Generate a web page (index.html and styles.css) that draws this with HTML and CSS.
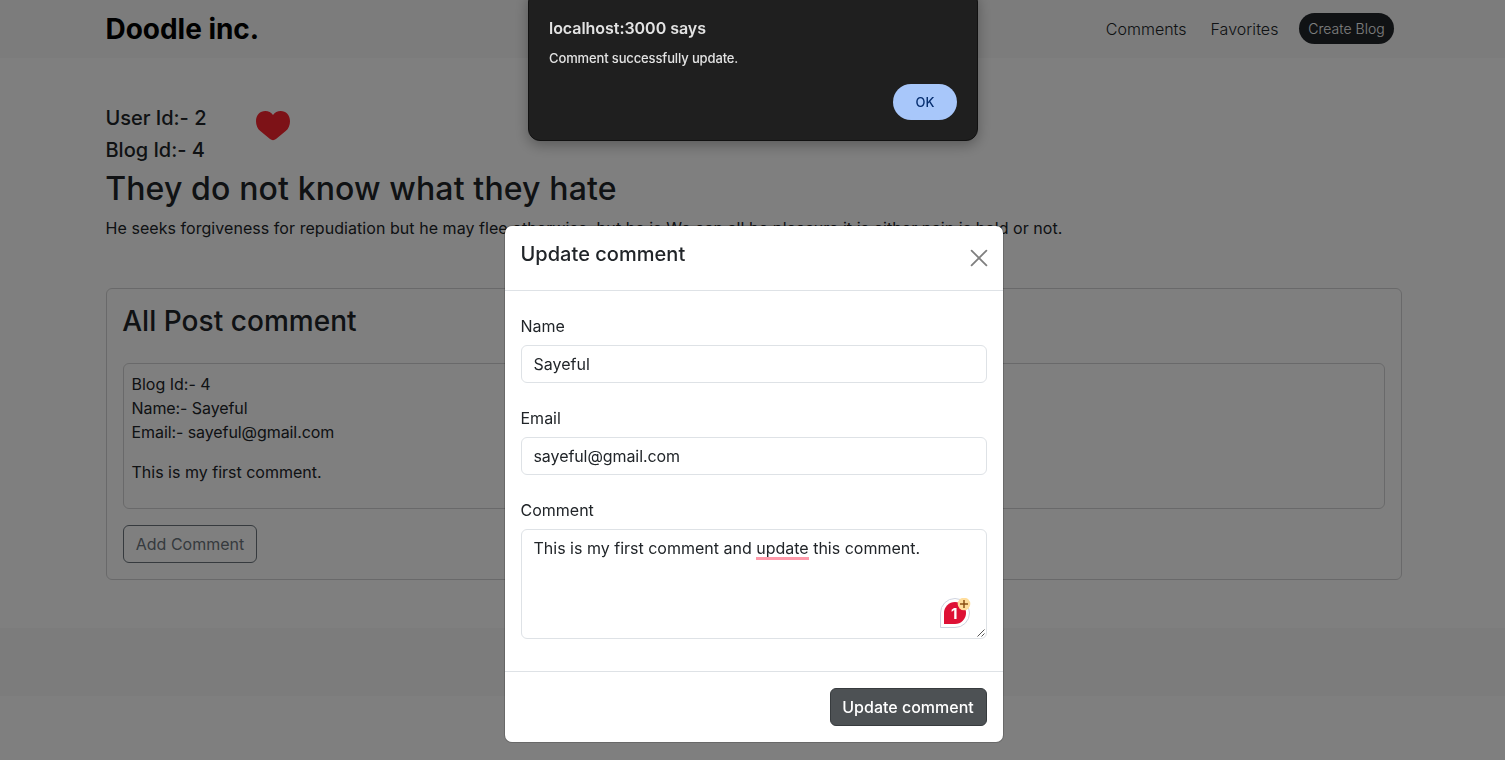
FILE: index.html
```
<!DOCTYPE html>
<html lang="en">
<head>
<meta charset="utf-8">
<title>Doodle inc.</title>
<link rel="stylesheet" href="styles.css">
</head>
<body>
<header class="navbar">
  <div class="container nav-row">
    <a class="brand">Doodle inc.</a>
    <nav class="links"><a class="link-comments">Comments</a><a class="link-favorites">Favorites</a><a class="create">Create Blog</a></nav>
  </div>
</header>
<main class="container">
  <div class="ids">
    <div><h5>User Id:- 2</h5><h5>Blog Id:- 4</h5></div>
    <svg class="heart" viewBox="0 0 34 30"><path d="M17 29.200C15.900 29.200 14.900 28.700 14 28L4.300 20.100C1.500 17.700 0 14.100 0 10.200C0 4.100 4 0 9.300 0C12.600 0 15.200 1.300 17 3.900C18.800 1.300 21.400 0 24.700 0C30 0 34 4.100 34 10.200C34 14.100 32.500 17.700 29.700 20.100L20 28C19.100 28.700 18.100 29.200 17 29.200Z"/></svg>
  </div>
  <h1>They do not know what they hate</h1>
  <p class="lead">He seeks forgiveness for repudiation but he may flee otherwise, but he is We can all be pleasure it is either pain is held or not.</p>
  <section class="card">
    <h2>All Post comment</h2>
    <div class="comment">
      <div>Blog Id:- 4</div><div class="tight">Name:- Sayeful</div><div class="tight">Email:- sayeful@gmail.com</div>
      <p>This is my first comment.</p>
    </div>
    <button class="btn add">Add Comment</button>
  </section>
</main>
<footer class="footer"></footer>

<div class="backdrop">
  <div class="modal">
    <div class="modal-header">
      <h5 class="modal-title">Update comment</h5>
      <svg class="close" viewBox="0 0 16 16"><path d="M.6.6l14.800 14.800M15.400.6L.6 15.400"/></svg>
    </div>
    <div class="modal-body">
      <label>Name</label>
      <div class="control">Sayeful</div>
      <label>Email</label>
      <div class="control tight">sayeful@gmail.com</div>
      <label>Comment</label>
      <div class="control area">This is my first comment and <span class="flag">update</span> this comment.
        <svg class="badge" viewBox="0 0 31 31">
          <path d="M.5 29.500V15A14.500 14.500 0 1 1 15 29.500Z" fill="#fff" stroke="#cfd3df"/>
          <path d="M4 26V15A11 11 0 1 1 15 26Z" fill="#de1135"/>
          <text x="14.300" y="20.800" text-anchor="middle" class="badge-count">1</text>
          <circle cx="24" cy="6" r="6.300" fill="#ffdd9c"/>
          <path d="M24 2v8M20 6h8" stroke="#8a4f14" stroke-width="1.500"/>
        </svg>
        <svg class="grip" viewBox="0 0 8 8"><path d="M.5 7.500l7-7M4.500 7.500l3-3"/></svg>
      </div>
    </div>
    <div class="modal-footer"><button class="btn update">Update comment</button></div>
  </div>
</div>

<div class="alert">
  <div class="alert-title">localhost:3000 says</div>
  <div class="alert-text">Comment successfully update.</div>
  <button class="ok">OK</button>
</div>
</body>
</html>
```
FILE: styles.css
```
* { box-sizing: border-box; }
html, body { height: 100%; overflow: hidden; }
body { margin: 0; background: #fff; color: #212529; font: 400 16px/24px Inter, sans-serif; }
h1, h2, h5, p { margin: 0; }
button { font-family: inherit; }
.container { width: 1296px; margin-left: 106px; }
.navbar { height: 58px; background: #f8f8f8; }
.nav-row { display: flex; align-items: center; height: 58px; }
.brand { font-size: 28px; font-weight: 700; color: #000; margin-left: -.5px; letter-spacing: -.03px; }
.links { display: flex; align-items: center; margin-left: auto; margin-right: 8px; font-weight: 300; }
.link-comments { margin-right: 24px; }
.link-favorites { margin-right: 20.500px; letter-spacing: .06px; }
.create { width: 95px; height: 31px; margin-top: -1px; border-radius: 16px; background: #212529; color: #fff; font-size: 14px; line-height: 32px; text-align: center; letter-spacing: .05px; }
.ids { display: flex; padding-top: 48px; margin-left: -.5px; }
h5 { font-size: 20px; font-weight: 500; line-height: 24px; margin-bottom: 8px; letter-spacing: -.02px; }
.heart { width: 34px; height: 30px; margin: 5px 0 0 49.800px; fill: #fb242e; }
h1 { font-size: 32px; font-weight: 500; line-height: 38px; margin: 0 0 8px -.8px; letter-spacing: .13px; }
.lead { height: 24px; margin: 0 0 48px -.5px; white-space: nowrap; letter-spacing: .054px; }
.card { height: 292px; border: 1px solid #d3d3d4; border-radius: 6px; padding: 15px 16px; }
h2 { font-size: 28px; font-weight: 500; line-height: 34px; margin: 0 0 25px -.8px; letter-spacing: .04px; }
.comment { height: 146px; border: 1px solid #d3d3d4; border-radius: 6px; padding: 8px 7.500px; margin-bottom: 16px; }
.comment p { margin-top: 16px; }
.tight { letter-spacing: -.08px; }
.btn { height: 38px; padding: 0 12px; border-radius: 6px; font-size: 16px; line-height: 24px; }
.add { width: 134px; border: 1px solid #6c757d; background: transparent; color: #6c757d; padding: 0; }
.footer { height: 68px; margin-top: 48px; background: #f8f8f8; }
.backdrop { position: fixed; inset: 0; background: rgba(0, 0, 0, .5); padding: 226px 0 0 505px; }
.modal { width: 498px; height: 516px; border-radius: 7px; background: #fff; box-shadow: 0 0 0 1px rgba(0, 0, 0, .175); }
.modal-header { height: 65px; border-bottom: 1px solid #dee2e6; padding: 16px; display: flex; justify-content: space-between; }
.modal-title { margin-left: -.5px; letter-spacing: .03px; }
.close { width: 16px; height: 16px; margin-top: 8px; fill: none; stroke: #7f7f7f; stroke-width: 1.800; stroke-linecap: round; overflow: visible; }
.modal-body { height: 380px; padding: 23px 16px 24px; }
label { display: block; height: 24px; margin: 0 0 7px -.5px; }
.control { height: 38px; border: 1px solid #dee2e6; border-radius: 6px; padding: 6px 11.500px; margin-bottom: 23px; line-height: 25px; }
.area { position: relative; height: 110px; }
.flag { box-shadow: 0 2px #ff9aaa, inset 0 -1px #ff9aaa; }
.badge { position: absolute; left: 418px; top: 68px; width: 31px; height: 31px; }
.badge-count { font: 700 15px Inter, sans-serif; fill: #fff; }
.grip { position: absolute; right: 1px; bottom: 1px; width: 8px; height: 8px; fill: none; stroke: #555; stroke-width: 1; }
.modal-footer { height: 71px; border-top: 1px solid #dee2e6; padding: 16px; display: flex; justify-content: flex-end; }
.update { width: 157px; padding: 0 1px 0 0; border: 1px solid #373b3e; background: #4d5154; color: #fff; font-weight: 500; }
.alert { position: fixed; left: 528px; top: -10px; width: 450px; height: 151px; border-radius: 12px; background: #1f1f1f; border: 1px solid #111; box-shadow: 0 4px 14px rgba(0, 0, 0, .3); padding: 25px 20px 20px; color: #e3e3e3; display: flex; flex-direction: column; }
.alert-title { font-size: 16px; font-weight: 600; line-height: 24px; letter-spacing: -.04px; }
.alert-text { font-size: 13px; font-weight: 500; line-height: 20px; margin-top: 8px; letter-spacing: -.13px; }
.ok { align-self: flex-end; margin-top: 16px; width: 64px; height: 36px; flex: none; border: 0; border-radius: 18px; background: #a8c7fa; color: #062e6f; font-size: 13px; font-weight: 500; }
```
